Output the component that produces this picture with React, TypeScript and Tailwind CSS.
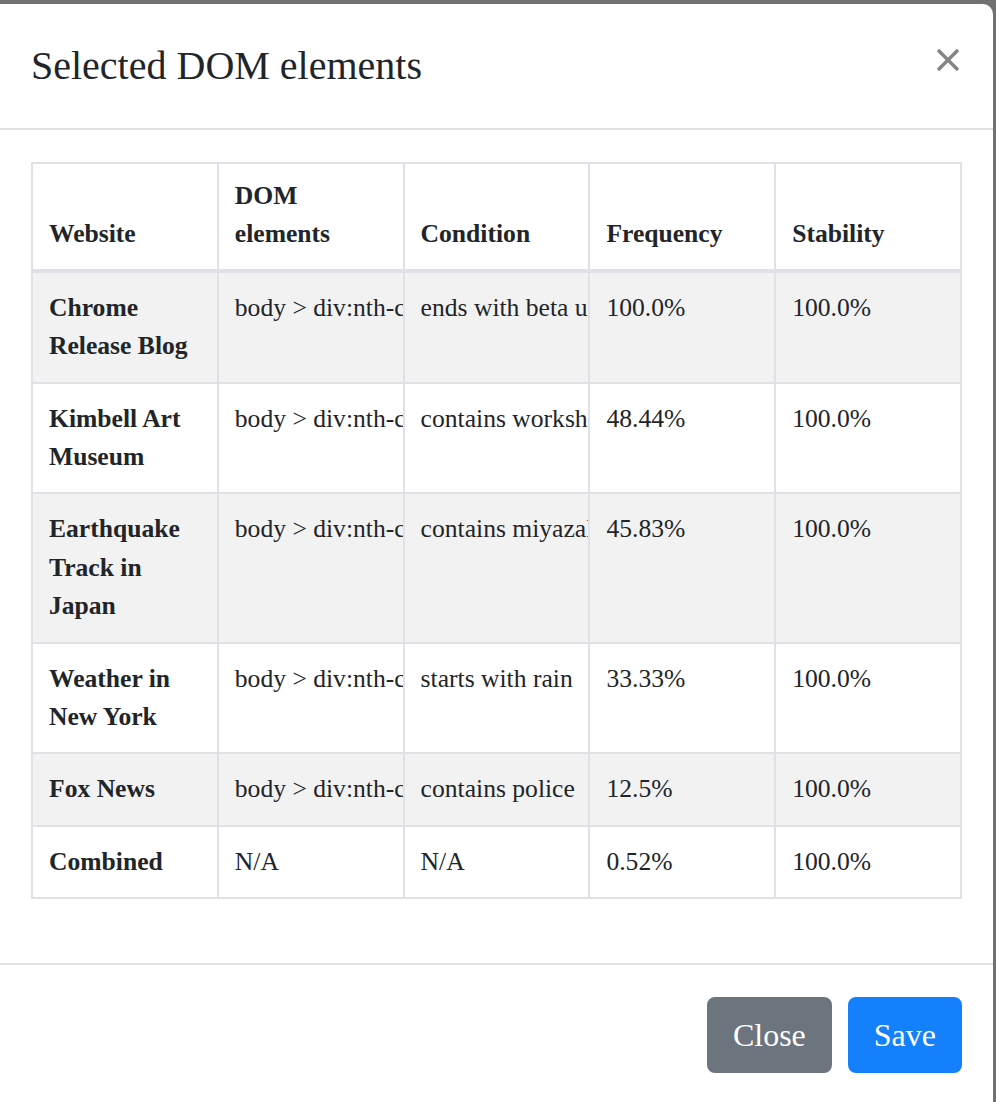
const rows = [
  {
    site: 'Chrome Release Blog',
    dom: 'body > div:nth-child(2) > div.post > h3 > a',
    cond: 'ends with beta update',
    freq: '100.0%',
    stab: '100.0%',
  },
  {
    site: 'Kimbell Art Museum',
    dom: 'body > div:nth-child(3) > section > ul > li',
    cond: 'contains workshop',
    freq: '48.44%',
    stab: '100.0%',
  },
  {
    site: 'Earthquake Track in Japan',
    dom: 'body > div:nth-child(1) > table > tbody > tr',
    cond: 'contains miyazaki',
    freq: '45.83%',
    stab: '100.0%',
  },
  {
    site: 'Weather in New York',
    dom: 'body > div:nth-child(4) > div.forecast > span',
    cond: 'starts with rain',
    freq: '33.33%',
    stab: '100.0%',
  },
  {
    site: 'Fox News',
    dom: 'body > div:nth-child(2) > main > article > h2',
    cond: 'contains police',
    freq: '12.5%',
    stab: '100.0%',
  },
  { site: 'Combined', dom: 'N/A', cond: 'N/A', freq: '0.52%', stab: '100.0%' },
];

export default function App() {
  const th =
    'border-2 border-b-4 border-[#dee2e6] px-[16px] pt-[13px] pb-[15px] text-left align-bottom font-bold';
  const td = 'border-2 border-[#dee2e6] px-[16px] py-[16px] align-top';
  const clip = 'overflow-hidden whitespace-nowrap';

  return (
    <div
      className="h-[1102px] w-[996px] overflow-hidden bg-[#717171] text-[#212529]"
      style={{ fontFamily: '"Liberation Serif", "Times New Roman", serif' }}
    >
      {/* page behind the backdrop, only its bottom edge shows */}
      <div className="h-[4px] overflow-hidden pl-[28px]">
        <div className="mt-[-27px] text-[32px] leading-[32px] text-[#121212]">
          Selected DOM elements
        </div>
      </div>

      <div className="flex">
        <div className="w-[993px] rounded-tr-[10px] bg-white">
          {/* header */}
          <div className="flex items-start border-b-2 border-[#dee2e6] pl-[31px] pr-[32px] py-[32px]">
            <h5 className="text-[40px] leading-[60px] font-medium">
              Selected DOM elements
            </h5>
            <button className="ml-auto mt-[12px] mr-[1px] opacity-60">
              <svg width="24" height="24" viewBox="0 0 24 24">
                <path
                  d="M2 2 L22 22 M22 2 L2 22"
                  stroke="#333"
                  strokeWidth="3.4"
                  strokeLinecap="butt"
                />
              </svg>
            </button>
          </div>

          {/* body */}
          <div className="px-[31px] pt-[32px] pb-[32px]">
            <table className="mb-[32px] w-full table-fixed border-collapse text-[25.6px] leading-[38.4px]">
              <thead>
                <tr>
                  <th className={th}>Website</th>
                  <th className={th}>DOM elements</th>
                  <th className={th}>Condition</th>
                  <th className={th}>Frequency</th>
                  <th className={th}>Stability</th>
                </tr>
              </thead>
              <tbody>
                {rows.map((r, i) => (
                  <tr key={r.site} className={i % 2 === 0 ? 'bg-[#f2f2f2]' : 'bg-white'}>
                    <td className={`${td} font-bold`}>{r.site}</td>
                    <td className={`${td} ${clip}`}>{r.dom}</td>
                    <td className={`${td} ${clip}`}>{r.cond}</td>
                    <td className={td}>{r.freq}</td>
                    <td className={td}>{r.stab}</td>
                  </tr>
                ))}
              </tbody>
            </table>
          </div>

          {/* footer */}
          <div className="flex justify-end gap-[16px] border-t-2 border-[#dee2e6] pl-[32px] pr-[31px] pt-[32px] pb-[32px]">
            <button className="rounded-[8px] border-2 border-[#6c757d] bg-[#6c757d] px-[24px] py-[12px] text-[32px] leading-[48px] text-white">
              Close
            </button>
            <button className="rounded-[8px] border-2 border-[#1480fb] bg-[#1480fb] px-[24px] py-[12px] text-[32px] leading-[48px] text-white">
              Save
            </button>
          </div>
        </div>
        <div className="flex-1" />
      </div>
    </div>
  );
}
